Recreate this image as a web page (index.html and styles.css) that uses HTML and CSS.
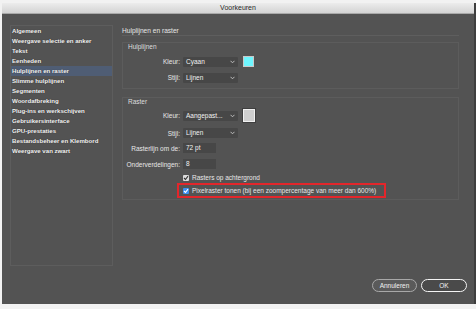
FILE: index.html
```html
<!DOCTYPE html>
<html lang="nl">
<head>
<meta charset="utf-8">
<title>Voorkeuren</title>
<link rel="stylesheet" href="styles.css">
</head>
<body>
<div class="dialog">
  <div class="titlebar">Voorkeuren</div>
  <div class="content">
    <div class="main">
      <ul class="sidebar">
        <li>Algemeen</li>
        <li>Weergave selectie en anker</li>
        <li>Tekst</li>
        <li>Eenheden</li>
        <li class="active">Hulplijnen en raster</li>
        <li>Slimme hulplijnen</li>
        <li>Segmenten</li>
        <li>Woordafbreking</li>
        <li>Plug-ins en werkschijven</li>
        <li>Gebruikersinterface</li>
        <li>GPU-prestaties</li>
        <li>Bestandsbeheer en Klembord</li>
        <li>Weergave van zwart</li>
      </ul>
      <div class="panel">
        <div class="heading">Hulplijnen en raster</div>
        <div class="group group-guides">
          <div class="legend">Hulplijnen</div>
          <div class="row row-swatch">
            <span class="lbl">Kleur:</span>
            <div class="select">Cyaan<svg class="chev" viewBox="0 0 5 4" width="5" height="4"><path d="M0.5 0.8 L2.5 2.8 L4.5 0.8" fill="none" stroke="#bdbdbd" stroke-width="1"/></svg></div>
            <span class="swatch swatch-cyan"></span>
          </div>
          <div class="row">
            <span class="lbl">Stijl:</span>
            <div class="select">Lijnen<svg class="chev" viewBox="0 0 5 4" width="5" height="4"><path d="M0.5 0.8 L2.5 2.8 L4.5 0.8" fill="none" stroke="#bdbdbd" stroke-width="1"/></svg></div>
          </div>
        </div>
        <div class="group group-grid">
          <div class="legend">Raster</div>
          <div class="row row-swatch2">
            <span class="lbl">Kleur:</span>
            <div class="select">Aangepast...<svg class="chev" viewBox="0 0 5 4" width="5" height="4"><path d="M0.5 0.8 L2.5 2.8 L4.5 0.8" fill="none" stroke="#bdbdbd" stroke-width="1"/></svg></div>
            <span class="swatch swatch-gray"></span>
          </div>
          <div class="row row-gap6">
            <span class="lbl">Stijl:</span>
            <div class="select">Lijnen<svg class="chev" viewBox="0 0 5 4" width="5" height="4"><path d="M0.5 0.8 L2.5 2.8 L4.5 0.8" fill="none" stroke="#bdbdbd" stroke-width="1"/></svg></div>
          </div>
          <div class="row row-gap5">
            <span class="lbl">Rasterlijn om de:</span>
            <div class="input">72 pt</div>
          </div>
          <div class="row row-gap6">
            <span class="lbl">Onderverdelingen:</span>
            <div class="input">8</div>
          </div>
          <div class="check-row">
            <span class="cb cb-gray"><svg viewBox="0 0 6 6" width="6" height="6"><path d="M1 3 L2.5 4.5 L5 1.2" fill="none" stroke="#333" stroke-width="1.1"/></svg></span>
            <span>Rasters op achtergrond</span>
          </div>
          <div class="check-row highlight">
            <span class="cb cb-blue"><svg viewBox="0 0 6 6" width="6" height="6"><path d="M1 3 L2.5 4.5 L5 1.2" fill="none" stroke="#fff" stroke-width="1.1"/></svg></span>
            <span>Pixelraster tonen (bij een zoompercentage van meer dan 600%)</span>
          </div>
        </div>
      </div>
    </div>
    <div class="footer">
      <button class="btn btn-cancel">Annuleren</button>
      <button class="btn btn-ok">OK</button>
    </div>
  </div>
</div>
</body>
</html>
```

FILE: styles.css
```css
* { box-sizing: border-box; }
html, body { margin: 0; padding: 0; }
body {
  background: #f2f2f2;
  width: 476px;
  height: 309px;
  overflow: hidden;
  font-family: "Liberation Sans", Arial, sans-serif;
}
.dialog {
  margin: 3px 0 0 2px;
  width: 474px;
  height: 301px;
  background: #535353;
  border-right: 2px solid #3e3e3e;
  display: flex;
  flex-direction: column;
}
.titlebar {
  height: 11px;
  line-height: 10px;
  text-align: center;
  font-size: 7px;
  color: #2a2a2a;
  background: linear-gradient(#ececec, #d3d3d3);
  border-bottom: 1px solid #a9a9a9;
}
.content {
  flex: 1;
  padding: 11px 7px 0 8px;
  display: flex;
  flex-direction: column;
}
.main {
  display: flex;
  gap: 9px;
  height: 241px;
}
.sidebar {
  list-style: none;
  margin: 0;
  padding: 0;
  width: 103px;
  height: 241px;
  border: 1px solid #5d5d5d;
}
.sidebar li {
  height: 10px;
  line-height: 10px;
  padding-left: 1px;
  font-size: 6.1px;
  font-weight: bold;
  color: #f4f4f4;
  text-shadow: 0 0 1px rgba(0,0,0,0.5);
  white-space: nowrap;
}
.sidebar li.active {
  background: #4f5d74;
}
.panel {
  width: 337px;
  display: flex;
  flex-direction: column;
}
.heading {
  padding-top: 2px;
  line-height: 8px;
  height: 11px;
  font-size: 6.6px;
  color: #e6e6e6;
  border-bottom: 1px solid #5e5e5e;
}
.group {
  border: 1px solid #5c5c5c;
  font-size: 6.5px;
  color: #e8e8e8;
}
.group-guides {
  margin-top: 6px;
  height: 47px;
}
.group-grid {
  margin-top: 8px;
  height: 103px;
}
.legend {
  line-height: 8px;
  height: 8px;
  padding-left: 5px;
  color: #dedede;
}
.row {
  display: flex;
  align-items: center;
  height: 10px;
}
.row-swatch { height: 11px; margin-top: 5px; }
.row-swatch + .row { margin-top: 5px; height: 11px; }
.row-swatch2 { height: 13px; margin-top: 3px; }
.row-gap6 { margin-top: 6px; }
.row-gap5 { margin-top: 5px; }
.lbl {
  width: 58px;
  text-align: right;
  padding-right: 1px;
  white-space: nowrap;
  margin-right: 2px;
}
.select {
  width: 55px;
  height: 10px;
  line-height: 10px;
  background: #474747;
  color: #f2f2f2;
  padding-left: 3px;
  padding-right: 3px;
  display: flex;
  align-items: center;
  justify-content: space-between;
  border-radius: 1px;
}
.chev { display: block; }
.input {
  width: 33px;
  height: 10px;
  line-height: 10px;
  background: #474747;
  color: #f2f2f2;
  padding-left: 3px;
}
.swatch {
  margin-left: 5px;
  display: block;
}
.swatch-cyan {
  width: 11px;
  height: 11px;
  background: #6ff6fe;
  border: 1px solid #c9c9c9;
}
.swatch-gray {
  width: 12px;
  height: 13px;
  background: #cfcfcf;
  border: 1.5px solid #f0f0f0;
  box-shadow: 0 0 0 1px #3f3f3f;
}
.check-row {
  display: flex;
  align-items: center;
  gap: 3px;
  padding-left: 60px;
  height: 9px;
  margin-top: 4px;
  white-space: nowrap;
}
.check-row.highlight {
  margin-top: 1px;
  margin-left: 54px;
  padding-left: 4px;
  width: 209px;
  height: 15px;
  border: 2px solid #e3262b;
}
.cb {
  width: 6px;
  height: 6px;
  display: block;
  border-radius: 1px;
}
.cb svg { display: block; }
.cb-gray { background: #dcdcdc; }
.cb-blue { background: #3d8ef0; }
.footer {
  margin-top: 13px;
  display: flex;
  justify-content: flex-end;
  gap: 4px;
}
.btn {
  height: 13px;
  border-radius: 7px;
  font-family: "Liberation Sans", Arial, sans-serif;
  font-size: 6.5px;
  color: #f2f2f2;
  padding: 0;
  line-height: 10px;
}
.btn-cancel {
  width: 45px;
  background: #5a5a5a;
  border: 1px solid #a8a8a8;
}
.btn-ok {
  width: 46px;
  background: #4a4a4a;
  border: 1.5px solid #f5f5f5;
}
```
